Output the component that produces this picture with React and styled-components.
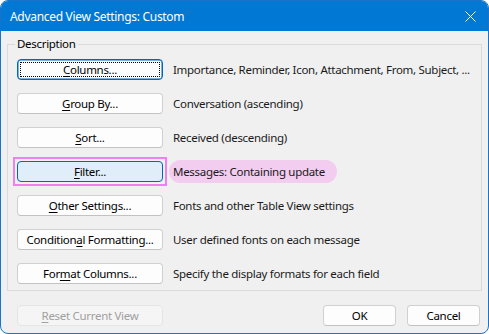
import React from "react";
import styled, { createGlobalStyle, css } from "styled-components";

const Global = createGlobalStyle`
  html, body { margin: 0; padding: 0; background: #ffffff; }
  body { font-family: "Noto Sans", "Open Sans", sans-serif; }
  * { box-sizing: border-box; }
`;

const Dialog = styled.div`
  width: 489px;
  height: 334px;
  border: 1px solid #1a73c8;
  border-radius: 8px;
  overflow: hidden;
  display: flex;
  flex-direction: column;
  background: #f0f0f0;
  font-family: "Noto Sans", "Open Sans", sans-serif;
  font-size: 11.5px;
  letter-spacing: -0.3px;
  color: #000;
`;

const TitleBar = styled.div`
  height: 30px;
  flex: none;
  background: #0078d4;
  display: flex;
  align-items: center;
  justify-content: space-between;
  padding: 0 9px 0 9px;
  color: #ffffff;
`;

const Title = styled.span`
  font-size: 12px;
  line-height: 1;
  margin-top: 1px;
`;

const CloseButton = styled.button`
  width: 22px;
  height: 22px;
  border: 0;
  padding: 0;
  background: transparent;
  display: flex;
  align-items: center;
  justify-content: center;
  margin-right: -2px;
`;

const Body = styled.div`
  flex: 1;
  display: flex;
  flex-direction: column;
  padding: 13px 6px 0 6px;
`;

const GroupBox = styled.div`
  position: relative;
  border: 1px solid #dadada;
  padding: 14px 9px 6px 9px;
  display: flex;
  flex-direction: column;
  gap: 13px;
`;

const Legend = styled.span`
  position: absolute;
  top: -9px;
  left: 7px;
  padding: 0 2px;
  background: #f0f0f0;
  line-height: 16px;
`;

const Row = styled.div`
  display: flex;
  align-items: center;
  gap: 10px;
  height: 21px;
`;

const Button = styled.button`
  position: relative;
  width: ${(p) => p.$w || 146}px;
  height: 21px;
  flex: none;
  border: 1px solid #d0d0d0;
  border-bottom-color: #c2c2c2;
  border-radius: 4px;
  background: #fdfdfd;
  font-family: inherit;
  font-size: inherit;
  letter-spacing: inherit;
  color: #000;
  padding: 0;
  line-height: 1;
  display: flex;
  align-items: center;
  justify-content: center;

  ${(p) =>
    p.$focused &&
    css`
      border: 1px solid #0067c0;
      box-shadow: inset 0 0 0 0.5px #0067c0;
      &::after {
        content: "";
        position: absolute;
        inset: 2px;
        border: 1px dotted #000;
        border-radius: 1px;
      }
    `}

  ${(p) =>
    p.$selected &&
    css`
      background: #e0eef9;
      border: 1px solid #0067c0;
    `}

  ${(p) =>
    p.$disabled &&
    css`
      background: #f5f5f5;
      border-color: #e5e5e5;
      color: #a0a0a0;
    `}
`;

const Mnemonic = styled.span`
  text-decoration: underline;
  text-underline-offset: 2px;
  text-decoration-thickness: 1px;
`;

const HighlightFrame = styled.div`
  margin: -4px;
  padding: 2px;
  border: 2px solid #f27ff2;
  flex: none;
  display: flex;
`;

const Desc = styled.span`
  color: #1a1a1a;
  white-space: nowrap;
  ${(p) =>
    p.$highlight &&
    css`
      background: #f2cdef;
      border-radius: 12px;
      height: 23px;
      display: flex;
      align-items: center;
      padding: 0 12px 0 4px;
      margin-left: -4px;
    `}
`;

const Footer = styled.div`
  display: flex;
  align-items: center;
  padding: 14px 2px 0 10px;
`;

const Spacer = styled.div`
  flex: 1;
`;

const FooterButtons = styled.div`
  display: flex;
  gap: 11px;
`;

function Label({ text, u }) {
  return (
    <>
      {text.slice(0, u)}
      <Mnemonic>{text[u]}</Mnemonic>
      {text.slice(u + 1)}
    </>
  );
}

const rows = [
  { text: "Columns...", u: 0, desc: "Importance, Reminder, Icon, Attachment, From, Subject, ...", focused: true },
  { text: "Group By...", u: 0, desc: "Conversation (ascending)" },
  { text: "Sort...", u: 0, desc: "Received (descending)" },
  { text: "Filter...", u: 0, desc: "Messages: Containing update", selected: true },
  { text: "Other Settings...", u: 0, desc: "Fonts and other Table View settings" },
  { text: "Conditional Formatting...", u: 9, desc: "User defined fonts on each message" },
  { text: "Format Columns...", u: 3, desc: "Specify the display formats for each field" },
];

export default function App() {
  return (
    <>
      <Global />
      <Dialog>
        <TitleBar>
          <Title>Advanced View Settings: Custom</Title>
          <CloseButton aria-label="Close">
            <svg width="11" height="11" viewBox="0 0 11 11">
              <path d="M0.5 0.5 L10.5 10.5 M10.5 0.5 L0.5 10.5" stroke="#fff" strokeWidth="1" />
            </svg>
          </CloseButton>
        </TitleBar>
        <Body>
          <GroupBox>
            <Legend>Description</Legend>
            {rows.map((r) => (
              <Row key={r.text}>
                {r.selected ? (
                  <HighlightFrame>
                    <Button $selected>
                      <Label text={r.text} u={r.u} />
                    </Button>
                  </HighlightFrame>
                ) : (
                  <Button $focused={r.focused}>
                    <Label text={r.text} u={r.u} />
                  </Button>
                )}
                <Desc $highlight={r.selected}>{r.desc}</Desc>
              </Row>
            ))}
          </GroupBox>
          <Footer>
            <Button $disabled disabled>
              <Label text="Reset Current View" u={0} />
            </Button>
            <Spacer />
            <FooterButtons>
              <Button $w={73}>OK</Button>
              <Button $w={73}>Cancel</Button>
            </FooterButtons>
          </Footer>
        </Body>
      </Dialog>
    </>
  );
}
